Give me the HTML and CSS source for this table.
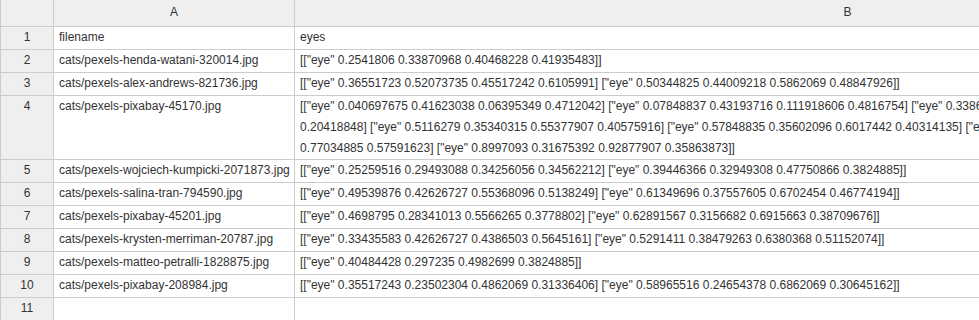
FILE: index.html
```html
<!DOCTYPE html>
<html>
<head>
<meta charset="utf-8">
<link rel="stylesheet" href="styles.css">
</head>
<body>
<table class="sheet">
  <colgroup>
    <col class="c-num">
    <col class="c-a">
    <col class="c-b">
  </colgroup>
  <thead>
    <tr class="head">
      <th class="corner"></th>
      <th>A</th>
      <th>B</th>
    </tr>
  </thead>
  <tbody>
    <tr><th class="num">1</th><td>filename</td><td>eyes</td></tr>
    <tr><th class="num">2</th><td>cats/pexels-henda-watani-320014.jpg</td><td>[["eye" 0.2541806 0.33870968 0.40468228 0.41935483]]</td></tr>
    <tr><th class="num">3</th><td>cats/pexels-alex-andrews-821736.jpg</td><td>[["eye" 0.36551723 0.52073735 0.45517242 0.6105991] ["eye" 0.50344825 0.44009218 0.5862069 0.48847926]]</td></tr>
    <tr><th class="num">4</th><td>cats/pexels-pixabay-45170.jpg</td><td class="multi">[["eye" 0.040697675 0.41623038 0.06395349 0.4712042] ["eye" 0.07848837 0.43193716 0.111918606 0.4816754] ["eye" 0.33866280 0.15445026 0.36337210<br>0.20418848] ["eye" 0.5116279 0.35340315 0.55377907 0.40575916] ["eye" 0.57848835 0.35602096 0.6017442 0.40314135] ["eye" 0.74709300 0.52094240<br>0.77034885 0.57591623] ["eye" 0.8997093 0.31675392 0.92877907 0.35863873]]</td></tr>
    <tr><th class="num">5</th><td>cats/pexels-wojciech-kumpicki-2071873.jpg</td><td>[["eye" 0.25259516 0.29493088 0.34256056 0.34562212] ["eye" 0.39446366 0.32949308 0.47750866 0.3824885]]</td></tr>
    <tr><th class="num">6</th><td>cats/pexels-salina-tran-794590.jpg</td><td>[["eye" 0.49539876 0.42626727 0.55368096 0.5138249] ["eye" 0.61349696 0.37557605 0.6702454 0.46774194]]</td></tr>
    <tr><th class="num">7</th><td>cats/pexels-pixabay-45201.jpg</td><td>[["eye" 0.4698795 0.28341013 0.5566265 0.3778802] ["eye" 0.62891567 0.3156682 0.6915663 0.38709676]]</td></tr>
    <tr><th class="num">8</th><td>cats/pexels-krysten-merriman-20787.jpg</td><td>[["eye" 0.33435583 0.42626727 0.4386503 0.5645161] ["eye" 0.5291411 0.38479263 0.6380368 0.51152074]]</td></tr>
    <tr><th class="num">9</th><td>cats/pexels-matteo-petralli-1828875.jpg</td><td>[["eye" 0.40484428 0.297235 0.4982699 0.3824885]]</td></tr>
    <tr><th class="num">10</th><td>cats/pexels-pixabay-208984.jpg</td><td>[["eye" 0.35517243 0.23502304 0.4862069 0.31336406] ["eye" 0.58965516 0.24654378 0.6862069 0.30645162]]</td></tr>
    <tr><th class="num">11</th><td></td><td></td></tr>
  </tbody>
</table>
</body>
</html>
```

FILE: styles.css
```css
html, body {
  margin: 0;
  padding: 0;
  background: #ffffff;
  overflow: hidden;
}

.sheet {
  border-collapse: collapse;
  table-layout: fixed;
  width: 1400px;
  font-family: "Liberation Sans", Arial, sans-serif;
  font-size: 12px;
  color: #333333;
}

.c-num { width: 53px; }
.c-a { width: 241px; }
.c-b { width: 1106px; }

.sheet th,
.sheet td {
  border: 1px solid #cccccc;
  border-top: none;
  padding: 0 5px;
  line-height: 21px;
  height: 23px;
  vertical-align: top;
  white-space: nowrap;
  overflow: hidden;
  text-align: left;
  font-weight: normal;
  box-sizing: border-box;
}

.head th {
  background: #efefef;
  text-align: center;
  height: 26px;
  line-height: 24px;
  padding: 0;
}

.sheet th.num {
  background: #efefef;
  text-align: center;
  padding: 0;
}

.sheet td.multi {
  height: 64px;
}
```
